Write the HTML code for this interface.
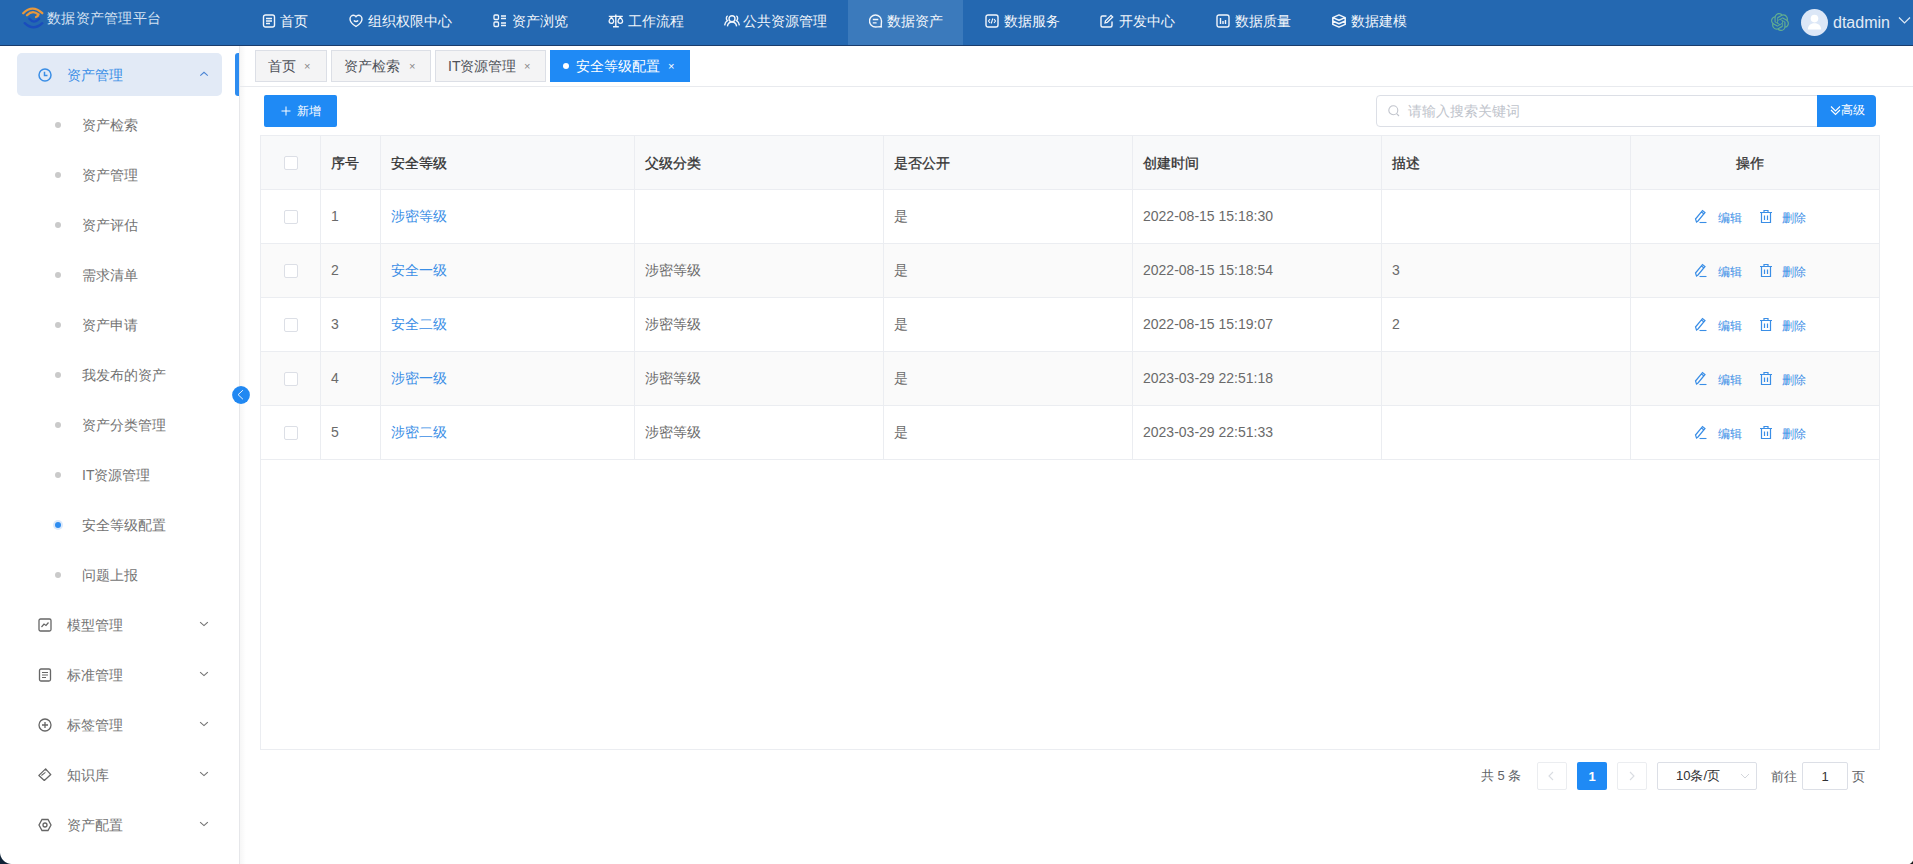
<!DOCTYPE html><html><head><meta charset="utf-8"><style>
*{margin:0;padding:0;box-sizing:border-box}
html,body{width:1913px;height:864px;overflow:hidden;background:#fff;font-family:"Liberation Sans",sans-serif;font-size:14px;color:#606266}
.ab{position:absolute;white-space:nowrap}
#hdr{position:absolute;left:0;top:0;width:1913px;height:46px;background:#2468b1;border-bottom:1px solid #1a3c6c}
.nt{position:absolute;top:13px;height:16px;line-height:16px;font-size:14px;color:#f2f6fb;white-space:nowrap}
.ni{position:absolute;top:14px;width:14px;height:14px}
.sm{position:absolute;font-size:14px;line-height:16px;color:#737373;white-space:nowrap}
.dot{position:absolute;width:6px;height:6px;border-radius:3px;background:#cacaca}
.tab{position:absolute;top:50px;height:32px;border:1px solid #dcdfe6;background:#f4f4f5}
.tt{position:absolute;top:58px;font-size:14px;line-height:16px;color:#4e5259;white-space:nowrap}
.tx{position:absolute;top:58px;font-size:11px;line-height:16px;color:#888;white-space:nowrap}
.hl{position:absolute;height:1px;background:#ebedf1}
.vl{position:absolute;width:1px;background:#ebedf1}
.th{position:absolute;font-size:14px;line-height:16px;font-weight:normal;-webkit-text-stroke:0.3px #333;color:#333;white-space:nowrap}
.td{position:absolute;font-size:14px;line-height:16px;color:#6a6a6a;white-space:nowrap}
.lk{color:#3a8ee6}
.cb{position:absolute;width:14px;height:14px;border:1px solid #dcdfe6;border-radius:2px;background:#fff}
.op{position:absolute;font-size:12px;line-height:14px;color:#3a8ee6;white-space:nowrap}
</style></head><body>
<div id="hdr"></div>
<svg class="ab" style="left:18px;top:2px" width="30" height="30" viewBox="0 0 30 30">
<path d="M5.2 11.2 Q14.5 2 24.3 11.2" stroke="#e8983c" stroke-width="2.3" fill="none" stroke-linecap="round"/>
<path d="M9 13.2 Q14.5 7.5 20.5 12.5 Q20 14.5 18 15" stroke="#e8983c" stroke-width="2.3" fill="none" stroke-linecap="round"/>
<path d="M11.3 16.8 Q16 22.5 21.2 16.8" stroke="#1a4dbd" stroke-width="2.3" fill="none" stroke-linecap="round"/>
<path d="M6.8 21.2 Q15.5 29.5 24.3 21.2" stroke="#1a4dbd" stroke-width="2.4" fill="none" stroke-linecap="round"/>
</svg>
<div class="ab" style="left:47px;top:10px;font-size:14px;line-height:16px;letter-spacing:0.25px;color:#d3e1f1">数据资产管理平台</div>
<div class="ab" style="left:848px;top:0;width:115px;height:45px;background:#3b7abc"></div>
<svg class="ni" style="left:262px" viewBox="0 0 14 14"><rect x="1.5" y="1" width="11" height="12" rx="2" stroke="#f2f6fb" stroke-width="1.4" fill="none"/><path d="M4 4.5h6M4 7h6M4 9.5h4" stroke="#f2f6fb" stroke-width="1.3"/></svg>
<div class="nt" style="left:280px">首页</div>
<svg class="ni" style="left:349px" viewBox="0 0 14 14"><path d="M7 12.5 C3 10 1 7.5 1 5 C1 2.5 3 1.2 4.5 1.2 C5.8 1.2 6.5 2 7 2.7 C7.5 2 8.2 1.2 9.5 1.2 C11 1.2 13 2.5 13 5 C13 7.5 11 10 7 12.5Z" stroke="#f2f6fb" stroke-width="1.4" fill="none"/><path d="M4.8 6.5 Q7 8.5 9.2 6.5" stroke="#f2f6fb" stroke-width="1.3" fill="none"/></svg>
<div class="nt" style="left:368px">组织权限中心</div>
<svg class="ni" style="left:493px" viewBox="0 0 14 14"><rect x="1" y="1" width="4.5" height="4.5" rx="1" stroke="#f2f6fb" stroke-width="1.3" fill="none"/><rect x="1" y="8" width="4.5" height="4.5" rx="1" stroke="#f2f6fb" stroke-width="1.3" fill="none"/><path d="M8 2h5M8 4.5h5M8 9h5M8 11.5h5" stroke="#f2f6fb" stroke-width="1.3"/></svg>
<div class="nt" style="left:512px">资产浏览</div>
<svg class="ni" style="left:608px;width:18px" viewBox="0 0 18 14"><path d="M0.8 2.4H14.8M7.8 0.6V12.6M5 12.7H10.8" stroke="#f2f6fb" stroke-width="1.4" fill="none"/><path d="M3.4 3.2C1.8 5 1.1 6.3 1.1 7.1A2.3 2.3 0 0 0 5.7 7.1C5.7 6.3 5 5 3.4 3.2ZM12.3 3.2C10.7 5 10 6.3 10 7.1A2.3 2.3 0 0 0 14.6 7.1C14.6 6.3 13.9 5 12.3 3.2Z" stroke="#f2f6fb" stroke-width="1.3" fill="none"/></svg>
<div class="nt" style="left:628px">工作流程</div>
<svg class="ni" style="left:723px;width:18px" viewBox="0 0 18 14"><circle cx="9" cy="4.7" r="3" stroke="#f2f6fb" stroke-width="1.4" fill="none"/><path d="M4.4 12.3C4.8 9.6 6.5 8 9 8C11.5 8 13.2 9.6 13.6 12.3M4.7 1.9C3.1 2.5 2.8 5.5 4.5 6.7C2.8 7.6 1.9 9.2 1.6 11.4M13.3 1.9C14.9 2.5 15.2 5.5 13.5 6.7C15.2 7.6 16.1 9.2 16.4 11.4" stroke="#f2f6fb" stroke-width="1.4" fill="none"/></svg>
<div class="nt" style="left:743px">公共资源管理</div>
<svg class="ni" style="left:869px" viewBox="0 0 14 14"><path d="M6.5 13 A6 6 0 1 1 12.5 7 C12.5 9 12 11 12.3 12.8 C10.5 12.5 8.5 13 6.5 13Z" stroke="#f2f6fb" stroke-width="1.4" fill="none"/><path d="M3.8 5.5h5.5M3.8 8.8h3.8" stroke="#f2f6fb" stroke-width="1.3"/></svg>
<div class="nt" style="left:887px">数据资产</div>
<svg class="ni" style="left:985px" viewBox="0 0 14 14"><rect x="1" y="1" width="12" height="12" rx="2" stroke="#f2f6fb" stroke-width="1.4" fill="none"/><path d="M5 5 L3.5 7 L5 9M9 5 L10.5 7 L9 9M7.8 4.5 L6.2 9.5" stroke="#f2f6fb" stroke-width="1.1" fill="none"/></svg>
<div class="nt" style="left:1004px">数据服务</div>
<svg class="ni" style="left:1100px" viewBox="0 0 14 14"><path d="M6.5 2H2.5a1.5 1.5 0 0 0-1.5 1.5v8a1.5 1.5 0 0 0 1.5 1.5h8a1.5 1.5 0 0 0 1.5-1.5V7.5" stroke="#f2f6fb" stroke-width="1.4" fill="none"/><path d="M5 9 L5.5 6.8 L11 1.3 L12.7 3 L7.2 8.5Z" stroke="#f2f6fb" stroke-width="1.3" fill="none"/></svg>
<div class="nt" style="left:1119px">开发中心</div>
<svg class="ni" style="left:1216px" viewBox="0 0 14 14"><rect x="1" y="1" width="12" height="12" rx="2" stroke="#f2f6fb" stroke-width="1.4" fill="none"/><path d="M4.5 4v6M7 7v3M9.5 6v4" stroke="#f2f6fb" stroke-width="1.4"/></svg>
<div class="nt" style="left:1235px">数据质量</div>
<svg class="ni" style="left:1332px" viewBox="0 0 14 14"><path d="M0.8 3.6 L7 0.9 L13.2 3.6 V10.4 L7 13.1 L0.8 10.4Z M0.8 3.6 L7 6.3 L13.2 3.6 M0.8 7 L7 9.7 L13.2 7" stroke="#f2f6fb" stroke-width="1.5" fill="none" stroke-linejoin="round"/></svg>
<div class="nt" style="left:1351px">数据建模</div>
<svg class="ab" style="left:1771px;top:13px" width="18" height="18" viewBox="0 0 24 24"><path fill="#62ad90" d="M22.2819 9.8211a5.9847 5.9847 0 0 0-.5157-4.9108 6.0462 6.0462 0 0 0-6.5098-2.9A6.0651 6.0651 0 0 0 4.9807 4.1818a5.9847 5.9847 0 0 0-3.9977 2.9 6.0462 6.0462 0 0 0 .7427 7.0966 5.98 5.98 0 0 0 .511 4.9107 6.051 6.051 0 0 0 6.5146 2.9001A5.9847 5.9847 0 0 0 13.2599 24a6.0557 6.0557 0 0 0 5.7718-4.2058 5.9894 5.9894 0 0 0 3.9977-2.9001 6.0557 6.0557 0 0 0-.7475-7.0729zm-9.022 12.6081a4.4755 4.4755 0 0 1-2.8764-1.0408l.1419-.0804 4.7783-2.7582a.7948.7948 0 0 0 .3927-.6813v-6.7369l2.02 1.1686a.071.071 0 0 1 .038.052v5.5826a4.504 4.504 0 0 1-4.4945 4.4944zm-9.6607-4.1254a4.4708 4.4708 0 0 1-.5346-3.0137l.142.0852 4.783 2.7582a.7712.7712 0 0 0 .7806 0l5.8428-3.3685v2.3324a.0804.0804 0 0 1-.0332.0615L9.74 19.9502a4.4992 4.4992 0 0 1-6.1408-1.6464zM2.3408 7.8956a4.485 4.485 0 0 1 2.3655-1.9728V11.6a.7664.7664 0 0 0 .3879.6765l5.8144 3.3543-2.0201 1.1685a.0757.0757 0 0 1-.071 0l-4.8303-2.7865A4.504 4.504 0 0 1 2.3408 7.872zm16.5963 3.8558L13.1038 8.364 15.1192 7.2a.0757.0757 0 0 1 .071 0l4.8303 2.7913a4.4944 4.4944 0 0 1-.6765 8.1042v-5.6772a.79.79 0 0 0-.407-.667zm2.0107-3.0231l-.142-.0852-4.7735-2.7818a.7759.7759 0 0 0-.7854 0L9.409 9.2297V6.8974a.0662.0662 0 0 1 .0284-.0615l4.8303-2.7866a4.4992 4.4992 0 0 1 6.6802 4.66zM8.3065 12.863l-2.02-1.1638a.0804.0804 0 0 1-.038-.0567V6.0742a4.4992 4.4992 0 0 1 7.3757-3.4537l-.142.0805L8.704 5.459a.7948.7948 0 0 0-.3927.6813zm1.0976-2.3654l2.602-1.4998 2.6069 1.4998v2.9994l-2.5974 1.4997-2.6067-1.4997Z"/></svg>
<div class="ab" style="left:1801px;top:9px;width:27px;height:27px;border-radius:50%;background:#dce7f7"></div>
<svg class="ab" style="left:1801px;top:9px" width="27" height="27" viewBox="0 0 27 27"><circle cx="13.5" cy="9.6" r="3.8" fill="#fff"/><path d="M6.8 20.5 C7.2 16.5 9.5 14.3 13.5 14.3 C17.5 14.3 19.8 16.5 20.2 20.5Z" fill="#fff"/></svg>
<div class="ab" style="left:1833px;top:13px;font-size:16px;line-height:20px;color:#e3ebf5">dtadmin</div>
<svg class="ab" style="left:1898px;top:16px" width="13" height="9" viewBox="0 0 13 9"><path d="M1 1.5 L6.5 7 L12 1.5" stroke="#dde8f4" stroke-width="1.2" fill="none"/></svg>
<div class="ab" style="left:239px;top:46px;width:1px;height:818px;background:#e6e7ea"></div>
<div class="ab" style="left:240px;top:46px;width:6px;height:818px;background:linear-gradient(to right, rgba(0,0,0,0.035), rgba(0,0,0,0))"></div>
<div class="ab" style="left:17px;top:53px;width:205px;height:43px;background:#e2eaf6;border-radius:5px"></div>
<div class="ab" style="left:235px;top:53px;width:4px;height:43px;background:#2d8cf0;border-radius:3px 0 0 3px"></div>
<svg class="ab" style="left:38px;top:68px" width="14" height="14" viewBox="0 0 14 14"><circle cx="7" cy="7" r="6" stroke="#3a8ee6" stroke-width="1.5" fill="none"/><path d="M6.5 3.8V7.5H9.5" stroke="#3a8ee6" stroke-width="1.5" fill="none"/></svg>
<div class="sm" style="left:67px;top:67px;color:#3a8ee6">资产管理</div>
<svg class="ab" style="left:198px;top:70px" width="12" height="8" viewBox="0 0 12 8"><path d="M2.3 5.6 L6 2.3 L9.8 5.6" stroke="#4a84d4" stroke-width="1.1" fill="none"/></svg>
<div class="dot" style="left:55px;top:122px"></div>
<div class="sm" style="left:82px;top:117px">资产检索</div>
<div class="dot" style="left:55px;top:172px"></div>
<div class="sm" style="left:82px;top:167px">资产管理</div>
<div class="dot" style="left:55px;top:222px"></div>
<div class="sm" style="left:82px;top:217px">资产评估</div>
<div class="dot" style="left:55px;top:272px"></div>
<div class="sm" style="left:82px;top:267px">需求清单</div>
<div class="dot" style="left:55px;top:322px"></div>
<div class="sm" style="left:82px;top:317px">资产申请</div>
<div class="dot" style="left:55px;top:372px"></div>
<div class="sm" style="left:82px;top:367px">我发布的资产</div>
<div class="dot" style="left:55px;top:422px"></div>
<div class="sm" style="left:82px;top:417px">资产分类管理</div>
<div class="dot" style="left:55px;top:472px"></div>
<div class="sm" style="left:82px;top:467px">IT资源管理</div>
<div class="ab" style="left:53px;top:520px;width:10px;height:10px;border-radius:5px;background:#dbe9fb"></div>
<div class="dot" style="left:55px;top:522px;background:#2d8cf0"></div>
<div class="sm" style="left:82px;top:517px">安全等级配置</div>
<div class="dot" style="left:55px;top:572px"></div>
<div class="sm" style="left:82px;top:567px">问题上报</div>
<svg class="ab" style="left:38px;top:618px" width="14" height="14" viewBox="0 0 14 14"><rect x="1" y="1" width="12" height="12" rx="1.5" stroke="#666" stroke-width="1.3" fill="none"/><path d="M3.5 9 L6 6 L8 7.5 L10.5 4.5" stroke="#666" stroke-width="1.2" fill="none"/></svg>
<div class="sm" style="left:67px;top:617px">模型管理</div>
<svg class="ab" style="left:198px;top:620px" width="12" height="8" viewBox="0 0 12 8"><path d="M2.1 2.1 L6 5.6 L9.8 2.1" stroke="#707070" stroke-width="1.1" fill="none"/></svg>
<svg class="ab" style="left:38px;top:668px" width="14" height="14" viewBox="0 0 14 14"><rect x="1.5" y="1" width="11" height="12" rx="1.5" stroke="#666" stroke-width="1.3" fill="none"/><path d="M4 4.5h6M4 7h6M4 9.5h4" stroke="#666" stroke-width="1.2"/></svg>
<div class="sm" style="left:67px;top:667px">标准管理</div>
<svg class="ab" style="left:198px;top:670px" width="12" height="8" viewBox="0 0 12 8"><path d="M2.1 2.1 L6 5.6 L9.8 2.1" stroke="#707070" stroke-width="1.1" fill="none"/></svg>
<svg class="ab" style="left:38px;top:718px" width="14" height="14" viewBox="0 0 14 14"><circle cx="7" cy="7" r="6" stroke="#666" stroke-width="1.3" fill="none"/><path d="M7 4v6M4 7h6" stroke="#666" stroke-width="1.3"/></svg>
<div class="sm" style="left:67px;top:717px">标签管理</div>
<svg class="ab" style="left:198px;top:720px" width="12" height="8" viewBox="0 0 12 8"><path d="M2.1 2.1 L6 5.6 L9.8 2.1" stroke="#707070" stroke-width="1.1" fill="none"/></svg>
<svg class="ab" style="left:38px;top:768px" width="14" height="14" viewBox="0 0 14 14"><path d="M7.6 0.9 L12.8 6.6 L6.3 12.4 L0.9 7.4 Z" stroke="#666" stroke-width="1.3" fill="none" stroke-linejoin="round"/><path d="M7.6 0.9 L8.2 3.2 M3.4 7.5 L7.4 4.4" stroke="#666" stroke-width="1.1" fill="none"/></svg>
<div class="sm" style="left:67px;top:767px">知识库</div>
<svg class="ab" style="left:198px;top:770px" width="12" height="8" viewBox="0 0 12 8"><path d="M2.1 2.1 L6 5.6 L9.8 2.1" stroke="#707070" stroke-width="1.1" fill="none"/></svg>
<svg class="ab" style="left:38px;top:818px" width="14" height="14" viewBox="0 0 14 14"><path d="M4 1.5h6L13 7l-3 5.5H4L1 7Z" stroke="#666" stroke-width="1.3" fill="none"/><circle cx="7" cy="7" r="2" stroke="#666" stroke-width="1.3" fill="none"/></svg>
<div class="sm" style="left:67px;top:817px">资产配置</div>
<svg class="ab" style="left:198px;top:820px" width="12" height="8" viewBox="0 0 12 8"><path d="M2.1 2.1 L6 5.6 L9.8 2.1" stroke="#707070" stroke-width="1.1" fill="none"/></svg>
<svg class="ab" style="left:232px;top:386px" width="18" height="18" viewBox="0 0 18 18"><circle cx="9" cy="9" r="8.9" fill="#2188f2"/><path d="M10.9 4.2 L6.1 8.7 L10.9 13.2" stroke="#fff" stroke-width="0.9" fill="none"/></svg>
<div class="tab" style="left:255px;width:72px"></div>
<div class="tt" style="left:268px">首页</div>
<div class="tx" style="left:304px">×</div>
<div class="tab" style="left:331px;width:100px"></div>
<div class="tt" style="left:344px">资产检索</div>
<div class="tx" style="left:409px">×</div>
<div class="tab" style="left:435px;width:111px"></div>
<div class="tt" style="left:448px">IT资源管理</div>
<div class="tx" style="left:524px">×</div>
<div class="tab" style="left:550px;width:140px;background:#1f8af5;border-color:#1f8af5"></div>
<div class="ab" style="left:563px;top:63px;width:6px;height:6px;border-radius:3px;background:#fff"></div>
<div class="tt" style="left:576px;color:#fff">安全等级配置</div>
<div class="tx" style="left:668px;color:#fff">×</div>
<div class="ab" style="left:240px;top:86px;width:1673px;height:1px;background:#e8eaee"></div>
<div class="ab" style="left:264px;top:95px;width:73px;height:32px;background:#1f8af5;border-radius:2px"></div>
<svg class="ab" style="left:281px;top:106px" width="10" height="10" viewBox="0 0 10 10"><path d="M5 0.5v9M0.5 5h9" stroke="#fff" stroke-width="1"/></svg>
<div class="ab" style="left:297px;top:104px;font-size:12px;line-height:14px;color:#fff">新增</div>
<div class="ab" style="left:1376px;top:95px;width:442px;height:32px;border:1px solid #dcdfe6;border-radius:4px 0 0 4px;background:#fff"></div>
<svg class="ab" style="left:1388px;top:105px" width="12" height="12" viewBox="0 0 12 12"><circle cx="5.3" cy="5.3" r="4.5" stroke="#c0c4cc" stroke-width="1.1" fill="none"/><path d="M8.6 8.6 L11 11" stroke="#c0c4cc" stroke-width="1.1"/></svg>
<div class="ab" style="left:1408px;top:103px;font-size:14px;line-height:16px;color:#c0c4cc">请输入搜索关键词</div>
<div class="ab" style="left:1817px;top:95px;width:59px;height:32px;background:#1f8af5;border-radius:0 4px 4px 0"></div>
<svg class="ab" style="left:1830px;top:105px" width="11" height="11" viewBox="0 0 11 11"><path d="M1 1.5 L5.5 6 L10 1.5M1 5 L5.5 9.5 L10 5" stroke="#fff" stroke-width="1.1" fill="none"/></svg>
<div class="ab" style="left:1841px;top:103px;font-size:12px;line-height:14px;color:#fff">高级</div>
<div class="ab" style="left:260px;top:135px;width:1620px;height:55px;background:#f8f9fa"></div>
<div class="ab" style="left:261px;top:244px;width:1618px;height:53px;background:#fafafa"></div>
<div class="ab" style="left:261px;top:352px;width:1618px;height:53px;background:#fafafa"></div>
<div class="hl" style="left:260px;top:135px;width:1620px"></div>
<div class="hl" style="left:260px;top:189px;width:1620px"></div>
<div class="hl" style="left:260px;top:243px;width:1620px"></div>
<div class="hl" style="left:260px;top:297px;width:1620px"></div>
<div class="hl" style="left:260px;top:351px;width:1620px"></div>
<div class="hl" style="left:260px;top:405px;width:1620px"></div>
<div class="hl" style="left:260px;top:459px;width:1620px"></div>
<div class="hl" style="left:260px;top:749px;width:1620px"></div>
<div class="vl" style="left:260px;top:135px;height:615px"></div>
<div class="vl" style="left:320px;top:135px;height:325px"></div>
<div class="vl" style="left:380px;top:135px;height:325px"></div>
<div class="vl" style="left:634px;top:135px;height:325px"></div>
<div class="vl" style="left:883px;top:135px;height:325px"></div>
<div class="vl" style="left:1132px;top:135px;height:325px"></div>
<div class="vl" style="left:1381px;top:135px;height:325px"></div>
<div class="vl" style="left:1630px;top:135px;height:325px"></div>
<div class="vl" style="left:1879px;top:135px;height:615px"></div>
<div class="cb" style="left:284px;top:156px"></div>
<div class="th" style="left:331px;top:155px">序号</div>
<div class="th" style="left:391px;top:155px">安全等级</div>
<div class="th" style="left:645px;top:155px">父级分类</div>
<div class="th" style="left:894px;top:155px">是否公开</div>
<div class="th" style="left:1143px;top:155px">创建时间</div>
<div class="th" style="left:1392px;top:155px">描述</div>
<div class="th" style="left:1736px;top:155px">操作</div>
<div class="cb" style="left:284px;top:210px"></div>
<div class="td" style="left:331px;top:208px">1</div>
<div class="td lk" style="left:391px;top:208px">涉密等级</div>
<div class="td" style="left:645px;top:208px"></div>
<div class="td" style="left:894px;top:208px">是</div>
<div class="td" style="left:1143px;top:208px">2022-08-15 15:18:30</div>
<div class="td" style="left:1392px;top:208px"></div>
<svg class="ab" style="left:1694px;top:209px" width="14" height="15" viewBox="0 0 14 15"><path d="M2.5 13 L1.5 10 L8.5 1.5 L11 3.5 L4 12Z M7.5 3 L10 5" stroke="#3a8ee6" stroke-width="1.2" fill="none"/><path d="M5.5 13.5h7" stroke="#3a8ee6" stroke-width="1.1"/></svg>
<div class="op" style="left:1718px;top:211px">编辑</div>
<svg class="ab" style="left:1759px;top:209px" width="14" height="15" viewBox="0 0 14 15"><path d="M1 3.5h12M5 3.5V1.5h4v2M2.5 3.5V13.5h9V3.5M5.5 6.5v4.5M8.5 6.5v4.5" stroke="#3a8ee6" stroke-width="1.2" fill="none"/></svg>
<div class="op" style="left:1782px;top:211px">删除</div>
<div class="cb" style="left:284px;top:264px"></div>
<div class="td" style="left:331px;top:262px">2</div>
<div class="td lk" style="left:391px;top:262px">安全一级</div>
<div class="td" style="left:645px;top:262px">涉密等级</div>
<div class="td" style="left:894px;top:262px">是</div>
<div class="td" style="left:1143px;top:262px">2022-08-15 15:18:54</div>
<div class="td" style="left:1392px;top:262px">3</div>
<svg class="ab" style="left:1694px;top:263px" width="14" height="15" viewBox="0 0 14 15"><path d="M2.5 13 L1.5 10 L8.5 1.5 L11 3.5 L4 12Z M7.5 3 L10 5" stroke="#3a8ee6" stroke-width="1.2" fill="none"/><path d="M5.5 13.5h7" stroke="#3a8ee6" stroke-width="1.1"/></svg>
<div class="op" style="left:1718px;top:265px">编辑</div>
<svg class="ab" style="left:1759px;top:263px" width="14" height="15" viewBox="0 0 14 15"><path d="M1 3.5h12M5 3.5V1.5h4v2M2.5 3.5V13.5h9V3.5M5.5 6.5v4.5M8.5 6.5v4.5" stroke="#3a8ee6" stroke-width="1.2" fill="none"/></svg>
<div class="op" style="left:1782px;top:265px">删除</div>
<div class="cb" style="left:284px;top:318px"></div>
<div class="td" style="left:331px;top:316px">3</div>
<div class="td lk" style="left:391px;top:316px">安全二级</div>
<div class="td" style="left:645px;top:316px">涉密等级</div>
<div class="td" style="left:894px;top:316px">是</div>
<div class="td" style="left:1143px;top:316px">2022-08-15 15:19:07</div>
<div class="td" style="left:1392px;top:316px">2</div>
<svg class="ab" style="left:1694px;top:317px" width="14" height="15" viewBox="0 0 14 15"><path d="M2.5 13 L1.5 10 L8.5 1.5 L11 3.5 L4 12Z M7.5 3 L10 5" stroke="#3a8ee6" stroke-width="1.2" fill="none"/><path d="M5.5 13.5h7" stroke="#3a8ee6" stroke-width="1.1"/></svg>
<div class="op" style="left:1718px;top:319px">编辑</div>
<svg class="ab" style="left:1759px;top:317px" width="14" height="15" viewBox="0 0 14 15"><path d="M1 3.5h12M5 3.5V1.5h4v2M2.5 3.5V13.5h9V3.5M5.5 6.5v4.5M8.5 6.5v4.5" stroke="#3a8ee6" stroke-width="1.2" fill="none"/></svg>
<div class="op" style="left:1782px;top:319px">删除</div>
<div class="cb" style="left:284px;top:372px"></div>
<div class="td" style="left:331px;top:370px">4</div>
<div class="td lk" style="left:391px;top:370px">涉密一级</div>
<div class="td" style="left:645px;top:370px">涉密等级</div>
<div class="td" style="left:894px;top:370px">是</div>
<div class="td" style="left:1143px;top:370px">2023-03-29 22:51:18</div>
<div class="td" style="left:1392px;top:370px"></div>
<svg class="ab" style="left:1694px;top:371px" width="14" height="15" viewBox="0 0 14 15"><path d="M2.5 13 L1.5 10 L8.5 1.5 L11 3.5 L4 12Z M7.5 3 L10 5" stroke="#3a8ee6" stroke-width="1.2" fill="none"/><path d="M5.5 13.5h7" stroke="#3a8ee6" stroke-width="1.1"/></svg>
<div class="op" style="left:1718px;top:373px">编辑</div>
<svg class="ab" style="left:1759px;top:371px" width="14" height="15" viewBox="0 0 14 15"><path d="M1 3.5h12M5 3.5V1.5h4v2M2.5 3.5V13.5h9V3.5M5.5 6.5v4.5M8.5 6.5v4.5" stroke="#3a8ee6" stroke-width="1.2" fill="none"/></svg>
<div class="op" style="left:1782px;top:373px">删除</div>
<div class="cb" style="left:284px;top:426px"></div>
<div class="td" style="left:331px;top:424px">5</div>
<div class="td lk" style="left:391px;top:424px">涉密二级</div>
<div class="td" style="left:645px;top:424px">涉密等级</div>
<div class="td" style="left:894px;top:424px">是</div>
<div class="td" style="left:1143px;top:424px">2023-03-29 22:51:33</div>
<div class="td" style="left:1392px;top:424px"></div>
<svg class="ab" style="left:1694px;top:425px" width="14" height="15" viewBox="0 0 14 15"><path d="M2.5 13 L1.5 10 L8.5 1.5 L11 3.5 L4 12Z M7.5 3 L10 5" stroke="#3a8ee6" stroke-width="1.2" fill="none"/><path d="M5.5 13.5h7" stroke="#3a8ee6" stroke-width="1.1"/></svg>
<div class="op" style="left:1718px;top:427px">编辑</div>
<svg class="ab" style="left:1759px;top:425px" width="14" height="15" viewBox="0 0 14 15"><path d="M1 3.5h12M5 3.5V1.5h4v2M2.5 3.5V13.5h9V3.5M5.5 6.5v4.5M8.5 6.5v4.5" stroke="#3a8ee6" stroke-width="1.2" fill="none"/></svg>
<div class="op" style="left:1782px;top:427px">删除</div>
<div class="ab" style="left:1481px;top:768px;font-size:13px;line-height:16px;color:#606266">共 5 条</div>
<div class="ab" style="left:1537px;top:762px;width:30px;height:28px;border:1px solid #ebedf0;border-radius:2px;background:#fff"></div>
<svg class="ab" style="left:1547px;top:771px" width="8" height="10" viewBox="0 0 8 10"><path d="M6 1 L2 5 L6 9" stroke="#d9dce1" stroke-width="1.1" fill="none"/></svg>
<div class="ab" style="left:1577px;top:762px;width:30px;height:28px;background:#1f8af5;border-radius:2px"></div>
<div class="ab" style="left:1577px;top:769px;width:30px;text-align:center;font-size:13px;line-height:16px;color:#fff;font-weight:bold">1</div>
<div class="ab" style="left:1617px;top:762px;width:30px;height:28px;border:1px solid #ebedf0;border-radius:2px;background:#fff"></div>
<svg class="ab" style="left:1628px;top:771px" width="8" height="10" viewBox="0 0 8 10"><path d="M2 1 L6 5 L2 9" stroke="#d9dce1" stroke-width="1.1" fill="none"/></svg>
<div class="ab" style="left:1657px;top:762px;width:100px;height:28px;border:1px solid #dcdfe6;border-radius:2px;background:#fff"></div>
<div class="ab" style="left:1676px;top:768px;font-size:13px;line-height:16px;color:#303133">10条/页</div>
<svg class="ab" style="left:1740px;top:773px" width="10" height="7" viewBox="0 0 10 7"><path d="M1 1 L5 5 L9 1" stroke="#d3d6db" stroke-width="1" fill="none"/></svg>
<div class="ab" style="left:1771px;top:769px;font-size:13px;line-height:16px;color:#606266">前往</div>
<div class="ab" style="left:1802px;top:762px;width:46px;height:28px;border:1px solid #dcdfe6;border-radius:2px;background:#fff"></div>
<div class="ab" style="left:1802px;top:769px;width:46px;text-align:center;font-size:13px;line-height:16px;color:#303133">1</div>
<div class="ab" style="left:1852px;top:769px;font-size:13px;line-height:16px;color:#606266">页</div>
<div class="ab" style="left:0;top:852px;width:12px;height:12px;background:radial-gradient(circle at 12px 0px, rgba(0,0,0,0) 11.5px, #0f2236 12.5px)"></div>
<div class="ab" style="left:1907px;top:858px;width:6px;height:6px;background:radial-gradient(circle at 0px 0px, rgba(0,0,0,0) 6px, #1a1a1a 7px)"></div>
</body></html>
